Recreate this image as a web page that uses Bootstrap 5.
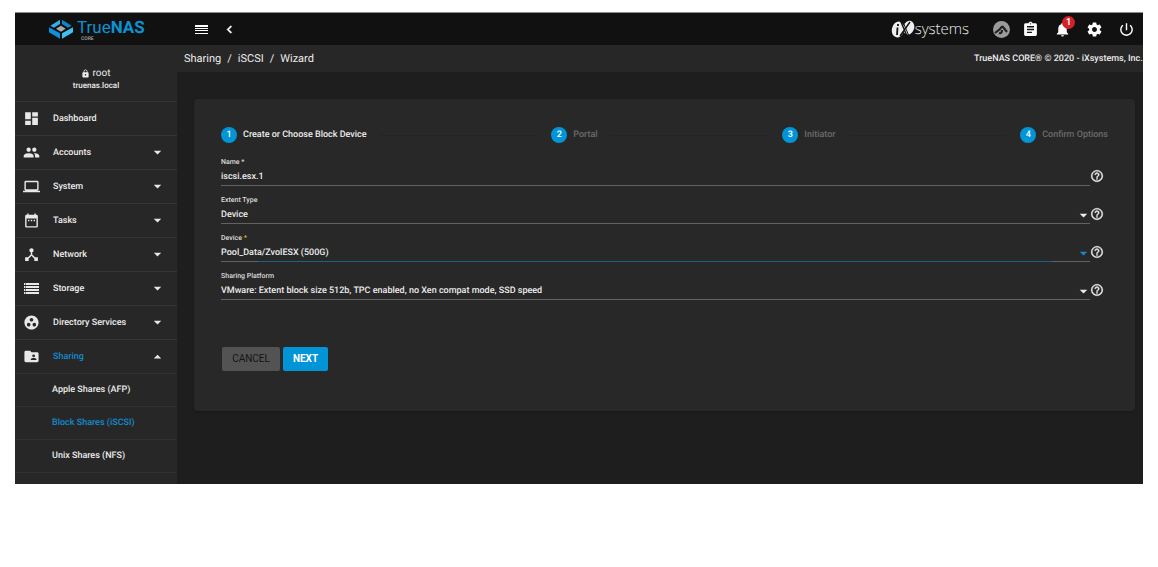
<!DOCTYPE html>
<html lang="en" data-bs-theme="dark">
<head>
<meta charset="utf-8">
<meta name="viewport" content="width=device-width, initial-scale=1">
<title>TrueNAS - Sharing / iSCSI / Wizard</title>
<link href="https://cdn.jsdelivr.net/npm/bootstrap@5.3.0/dist/css/bootstrap.min.css" rel="stylesheet">
<style>
body{background:#fff;color:#ececec;font-family:Roboto,"Liberation Sans",sans-serif;font-size:9px;line-height:14px;font-weight:500;padding:12px 15px;text-rendering:geometricPrecision}
a{color:inherit;text-decoration:none}
svg{display:block;flex:none;fill:currentColor}
.app{background:#1e1e1e;border-top:1px solid #8c8c8c;overflow:hidden}
.topbar{background:#111;height:32px;padding-right:1px}
.brand-box{width:162px;padding-left:34px;flex:none;color:#0b92d4}
.brand-name{font-size:17px;line-height:16px;font-weight:400}
.brand-sub{font-size:5px;line-height:6px;color:#aaa;padding-left:4px}
.bar-btn{background:none;border:0;padding:0;color:#fff;display:flex;align-items:center;justify-content:center;position:relative}
.tool{width:32px;height:32px}
.alert-count{position:absolute;left:16px;top:3px;width:13px;height:13px;border-radius:50%;background:#d3222a;font-size:9px;line-height:13px;font-weight:700;text-align:center}
.vendor{font:300 15px/20px "Open Sans","Liberation Sans",sans-serif;color:#eee}
.side{width:162px;flex:none;background:#272727;padding-bottom:11px}
.who{height:56px;padding-top:22px}
.who-name{font-size:10px;line-height:13px;font-weight:400}
.who-host{font-size:8px;line-height:12px}
.side-item{height:34px;padding:0 12px 0 8px;border-top:1px solid #353535}
.side-item span{padding-left:13px}
.side-sub{height:33px;padding-left:37px;border-top:1px solid #313131}
.side-sub:last-child{border-bottom:1px solid #313131;height:34px}
.on{color:#118bcd}
.side-item svg{color:#e8e8e8}
.crumbs{height:27px;background:#272727;padding-left:7px}
.trail{font-size:11px;gap:6px;font-weight:400}
.legal{width:169px;flex:none;white-space:nowrap}
.stage{padding:27px 8px 12px 17px}
.panel{background:#282828;border-radius:4px;padding:28px 27px 40px;box-shadow:0 1px 2px #181818}
.steps{margin-bottom:13px}
.step-no{width:16px;height:16px;border-radius:50%;background:#0195d8;color:#fff;line-height:16px;text-align:center;margin-right:6px}
.step-off{color:#6b6b6b}
.rule{height:1px;background:#242424;margin:0 13px}
.field{height:29px;margin-bottom:9px}
.field label{display:block;font-size:7px;line-height:13px;color:#dcdcdc}
.line{height:17px;border-bottom:1px solid #626262}
.line input,.line select{appearance:none;background:none;border:0;outline:0;padding:0;margin:0;width:100%;height:16px;color:#ececec;font:inherit;line-height:16px;text-rendering:inherit}
.line svg{pointer-events:none;margin-right:-1px}
.line-focus{border-image:linear-gradient(90deg,#626262 38px,#1b6283 38px,#1b6283 calc(100% - 39px),#626262 calc(100% - 39px)) 1}
.star{color:#f0b400}
.help{margin-right:4px;padding-top:13px}
.acts{padding:39px 0 0 1px;gap:3px}
.act{height:24px;border:0;border-radius:2px;font-size:10px;line-height:24px;padding:0;text-align:center}
.act-cancel{width:58px;background:#535353;color:#151515}
.act-next{width:45px;background:#0195d8;color:#fff;font-weight:700}
</style>
</head>
<body>
<svg class="d-none" aria-hidden="true">
<symbol id="down" viewBox="0 0 24 24"><path d="M6 9l6 6 6-6z"/></symbol>
<symbol id="help" viewBox="0 0 24 24"><path d="M11 18h2v-2h-2v2zm1-16C6.480 2 2 6.480 2 12s4.480 10 10 10 10-4.480 10-10S17.520 2 12 2zm0 18c-4.410 0-8-3.590-8-8s3.590-8 8-8 8 3.590 8 8-3.590 8-8 8zm0-14c-2.210 0-4 1.790-4 4h2c0-1.100.9-2 2-2s2 .9 2 2c0 2-3 1.750-3 5h2c0-2.250 3-2.500 3-5 0-2.210-1.790-4-4-4z" stroke="currentColor" stroke-width=".6"/></symbol>
</svg>
<div class="app">
<header class="topbar d-flex align-items-center">
  <a href="#" class="brand-box d-flex align-items-center" aria-label="TrueNAS CORE">
    <svg width="24" height="20" viewBox="147 56 72 58"><path fill="#2fb0e8" d="M151 75l29-18v13l-18 11z"/><path fill="#0c86cb" d="M186 57l29 18-11 6-18-11z"/><path fill="#0d92da" d="M147 80l33 18v16l-33-19z"/><path fill="#3fc0f2" d="M186 98l33-18v15l-33 19z"/><path fill="#aaa" d="M168 84l15-9 14 9-14 9z"/></svg>
    <span class="ps-1 pt-1"><span class="brand-name d-block">True<b>NAS</b></span><span class="brand-sub d-block">CORE</span></span>
  </a>
  <button class="bar-btn ms-3" aria-label="Toggle menu"><svg width="17" height="17" viewBox="0 0 17 17"><path d="M2 4h13v2H2zM2 7h13v1H2zM2 9h13v1H2zM2 12h13v1H2z"/></svg></button>
  <button class="bar-btn ms-2 ps-1" aria-label="Collapse"><svg width="15" height="15" viewBox="0 0 24 24"><path stroke="currentColor" d="M15.410 7.410L14 6l-6 6 6 6 1.410-1.410L10.830 12z"/></svg></button>
  <a href="#" class="vendor d-flex align-items-center ms-auto me-3" aria-label="iXsystems">
    <svg width="24" height="18" viewBox="0 0 24 18"><ellipse cx="7" cy="9.500" rx="6" ry="8" transform="rotate(12 7 9)"/><ellipse cx="17.500" cy="7.500" rx="5.500" ry="7" transform="rotate(20 17 8)"/><path d="M10 2l6 14M19 2L9 16" stroke="#111" stroke-width="1.400"/><path d="M12 2l6 14" stroke="#111" stroke-width="1"/><path d="M6.500 7.500L6 15M7 4v2" stroke="#111" stroke-width="1.800"/></svg>
    <span>systems</span>
  </a>
  <button class="bar-btn me-1 ms-2" aria-label="TrueCommand"><svg width="17" height="17" viewBox="0 0 17 17"><circle cx="8.500" cy="8.500" r="8.500" fill="#9b9b9b"/><path fill="none" stroke="#222" stroke-width="2.200" d="M2 12l5-4q2-3 3-2l4 5M6 12q3 1 3-3"/></svg></button>
  <button class="bar-btn tool" aria-label="Task manager"><svg width="17" height="17" viewBox="0 0 24 24"><path d="M19 3h-4.180C14.400 1.840 13.300 1 12 1c-1.300 0-2.400.84-2.820 2H5c-1.100 0-2 .9-2 2v14c0 1.100.9 2 2 2h14c1.100 0 2-.9 2-2V5c0-1.100-.9-2-2-2zm-7 0c.55 0 1 .45 1 1s-.45 1-1 1-1-.45-1-1 .45-1 1-1zm2 14H7v-2h7v2zm3-4H7v-2h10v2zm0-4H7V7h10v2z"/></svg></button>
  <button class="bar-btn tool" aria-label="Alerts"><svg width="17" height="17" viewBox="0 0 24 24"><path d="M12 22c1.100 0 2-.9 2-2h-4c0 1.100.89 2 2 2zm6-6v-5c0-3.070-1.640-5.640-4.500-6.320V4c0-.83-.67-1.500-1.500-1.500s-1.500.67-1.500 1.500v.68C7.630 5.360 6 7.920 6 11v5l-2 2v1h16v-1l-2-2z"/></svg><span class="alert-count">1</span></button>
  <button class="bar-btn tool" aria-label="Settings"><svg width="17" height="17" viewBox="0 0 24 24"><path d="M19.430 12.980c.04-.32.07-.64.07-.98s-.03-.66-.07-.98l2.110-1.650c.19-.15.24-.42.12-.64l-2-3.460c-.12-.22-.39-.3-.61-.22l-2.490 1c-.52-.4-1.080-.73-1.690-.98l-.38-2.650C14.460 2.180 14.250 2 14 2h-4c-.25 0-.46.18-.49.42l-.38 2.650c-.61.25-1.170.59-1.690.98l-2.490-1c-.23-.09-.49 0-.61.22l-2 3.460c-.13.22-.07.49.12.64l2.110 1.650c-.04.32-.07.65-.07.98s.03.66.07.98l-2.110 1.650c-.19.15-.24.42-.12.64l2 3.460c.12.22.39.3.61.22l2.490-1c.52.4 1.080.73 1.690.98l.38 2.650c.03.24.24.42.49.42h4c.25 0 .46-.18.49-.42l.38-2.650c.61-.25 1.170-.59 1.690-.98l2.490 1c.23.09.49 0 .61-.22l2-3.460c.12-.22.07-.49-.12-.64l-2.110-1.650zM12 15.500c-1.930 0-3.500-1.570-3.500-3.500s1.570-3.500 3.500-3.500 3.500 1.570 3.500 3.500-1.570 3.500-3.500 3.500z"/></svg></button>
  <button class="bar-btn tool" aria-label="Power"><svg width="17" height="17" viewBox="0 0 24 24"><path d="M13 3h-2v10h2V3zm4.830 2.170l-1.420 1.420C17.990 7.860 19 9.810 19 12c0 3.870-3.130 7-7 7s-7-3.130-7-7c0-2.190 1.010-4.140 2.580-5.420L6.170 5.170C4.230 6.820 3 9.260 3 12c0 4.970 4.030 9 9 9s9-4.030 9-9c0-2.740-1.230-5.180-3.170-6.830z"/></svg></button>
</header>
<div class="d-flex">
<nav class="side">
  <div class="who text-center">
    <div class="who-name d-flex justify-content-center align-items-center"><svg class="me-1" width="7" height="9" viewBox="3 0 18 23"><path d="M18 8h-1V6c0-2.760-2.240-5-5-5S7 3.240 7 6v2H6c-1.100 0-2 .9-2 2v10c0 1.100.9 2 2 2h12c1.100 0 2-.9 2-2V10c0-1.100-.9-2-2-2zm-6 9c-1.100 0-2-.9-2-2s.9-2 2-2 2 .9 2 2-.9 2-2 2zm3.100-9H8.900V6c0-1.710 1.390-3.100 3.100-3.100 1.710 0 3.100 1.390 3.100 3.100v2z"/></svg>root</div>
    <div class="who-host">truenas.local</div>
  </div>
  <a href="#" class="side-item d-flex align-items-center"><svg width="17" height="17" viewBox="0 0 24 24"><path d="M3 13h8V3H3v10zm0 8h8v-6H3v6zm10 0h8V11h-8v10zm0-18v6h8V3h-8z"/></svg><span>Dashboard</span></a>
  <a href="#" class="side-item d-flex align-items-center"><svg width="17" height="17" viewBox="0 0 24 24"><path d="M16 11c1.660 0 2.990-1.340 2.990-3S17.660 5 16 5c-1.660 0-3 1.340-3 3s1.340 3 3 3zm-8 0c1.660 0 2.990-1.340 2.990-3S9.660 5 8 5C6.340 5 5 6.340 5 8s1.340 3 3 3zm0 2c-2.330 0-7 1.170-7 3.500V19h14v-2.500c0-2.330-4.670-3.500-7-3.500zm8 0c-.29 0-.62.02-.97.05 1.160.84 1.970 1.970 1.970 3.450V19h6v-2.500c0-2.330-4.670-3.500-7-3.500z"/></svg><span>Accounts</span><svg class="ms-auto" width="15" height="15"><use href="#down"/></svg></a>
  <a href="#" class="side-item d-flex align-items-center"><svg width="17" height="17" viewBox="0 0 24 24"><path d="M20 18c1.100 0 1.990-.9 1.990-2L22 6c0-1.100-.9-2-2-2H4c-1.100 0-2 .9-2 2v10c0 1.100.9 2 2 2H0v2h24v-2h-4zM4 6h16v10H4V6z"/></svg><span>System</span><svg class="ms-auto" width="15" height="15"><use href="#down"/></svg></a>
  <a href="#" class="side-item d-flex align-items-center"><svg width="17" height="17" viewBox="0 0 24 24"><path d="M9 11H7v2h2v-2zm4 0h-2v2h2v-2zm4 0h-2v2h2v-2zm2-7h-1V2h-2v2H8V2H6v2H5c-1.110 0-1.990.9-1.990 2L3 20c0 1.100.89 2 2 2h14c1.100 0 2-.9 2-2V6c0-1.100-.9-2-2-2zm0 16H5V9h14v11z"/></svg><span>Tasks</span><svg class="ms-auto" width="15" height="15"><use href="#down"/></svg></a>
  <a href="#" class="side-item d-flex align-items-center"><svg width="17" height="17" viewBox="0 0 24 24"><path d="M17 16l-4-4V8.820C14.160 8.400 15 7.300 15 6c0-1.660-1.340-3-3-3S9 4.340 9 6c0 1.300.84 2.400 2 2.820V12l-4 4H3v5h5v-3.050l4-4.200 4 4.200V21h5v-5h-4z"/></svg><span>Network</span><svg class="ms-auto" width="15" height="15"><use href="#down"/></svg></a>
  <a href="#" class="side-item d-flex align-items-center"><svg width="17" height="17" viewBox="0 0 17 17"><path d="M1 3h15v2H1zM1 6h15v2H1zM1 9h15v2H1zM1 12h15v2H1z"/><path fill="#777" d="M2 3h1v2H2zM2 6h1v2H2zM2 9h1v2H2zM2 12h1v2H2z"/></svg><span>Storage</span><svg class="ms-auto" width="15" height="15"><use href="#down"/></svg></a>
  <a href="#" class="side-item d-flex align-items-center"><svg width="17" height="17" viewBox="0 0 24 24"><path d="M12 2C6.480 2 2 6.480 2 12s4.480 10 10 10 10-4.480 10-10S17.520 2 12 2zM8 17.500c-1.380 0-2.500-1.120-2.500-2.500s1.120-2.500 2.500-2.500 2.500 1.120 2.500 2.500-1.120 2.500-2.500 2.500zM9.500 8c0-1.380 1.120-2.500 2.500-2.500s2.500 1.120 2.500 2.500-1.120 2.500-2.500 2.500S9.500 9.380 9.500 8zm6.500 9.500c-1.380 0-2.500-1.120-2.500-2.500s1.120-2.500 2.500-2.500 2.500 1.120 2.500 2.500-1.120 2.500-2.500 2.500z"/></svg><span>Directory Services</span><svg class="ms-auto" width="15" height="15"><use href="#down"/></svg></a>
  <a href="#" class="side-item d-flex align-items-center"><svg width="17" height="17" viewBox="0 0 24 24"><path d="M20 6h-8l-2-2H4c-1.100 0-1.990.9-1.990 2L2 18c0 1.100.9 2 2 2h16c1.100 0 2-.9 2-2V8c0-1.100-.9-2-2-2zm-5 3c1.100 0 2 .9 2 2s-.9 2-2 2-2-.9-2-2 .9-2 2-2zm4 8h-8v-1c0-1.330 2.670-2 4-2s4 .67 4 2v1z"/></svg><span class="on">Sharing</span><svg class="ms-auto" width="15" height="15" viewBox="0 0 24 24"><path d="M6 15l6-6 6 6z"/></svg></a>
  <div>
    <a href="#" class="side-sub d-flex align-items-center">Apple Shares (AFP)</a>
    <a href="#" class="side-sub d-flex align-items-center on">Block Shares (iSCSI)</a>
    <a href="#" class="side-sub d-flex align-items-center">Unix Shares (NFS)</a>
  </div>
</nav>
<main class="flex-fill overflow-hidden">
  <div class="crumbs d-flex align-items-center justify-content-between">
    <div class="trail d-flex"><a href="#">Sharing</a><span>/</span><a href="#">iSCSI</a><span>/</span><a href="#">Wizard</a></div>
    <div class="legal">TrueNAS CORE® © 2020 - iXsystems, Inc.</div>
  </div>
  <div class="stage">
  <form class="panel">
    <div class="steps d-flex align-items-center">
      <span class="step-no">1</span><span>Create or Choose Block Device</span><span class="rule flex-fill"></span>
      <span class="step-no">2</span><span class="step-off">Portal</span><span class="rule flex-fill"></span>
      <span class="step-no">3</span><span class="step-off">Initiator</span><span class="rule flex-fill"></span>
      <span class="step-no">4</span><span class="step-off">Confirm Options</span>
    </div>
    <div class="field d-flex">
      <div class="flex-fill"><label for="f-name">Name *</label><div class="line d-flex"><input id="f-name" type="text" value="iscsi.esx.1"></div></div>
      <svg class="help" width="14" height="28"><use href="#help" width="14" height="14"/></svg>
    </div>
    <div class="field d-flex">
      <div class="flex-fill"><label for="f-type">Extent Type</label><div class="line d-flex align-items-center"><select id="f-type"><option>Device</option></select><svg width="15" height="15"><use href="#down"/></svg></div></div>
      <svg class="help" width="14" height="28"><use href="#help" width="14" height="14"/></svg>
    </div>
    <div class="field d-flex">
      <div class="flex-fill"><label for="f-dev">Device <span class="star">*</span></label><div class="line line-focus d-flex align-items-center"><select id="f-dev"><option>Pool_Data/ZvolESX (500G)</option></select><svg class="on" width="15" height="15"><use href="#down"/></svg></div></div>
      <svg class="help" width="14" height="28"><use href="#help" width="14" height="14"/></svg>
    </div>
    <div class="field d-flex">
      <div class="flex-fill"><label for="f-plat">Sharing Platform</label><div class="line d-flex align-items-center"><select id="f-plat"><option>VMware: Extent block size 512b, TPC enabled, no Xen compat mode, SSD speed</option></select><svg width="15" height="15"><use href="#down"/></svg></div></div>
      <svg class="help" width="14" height="28"><use href="#help" width="14" height="14"/></svg>
    </div>
    <div class="acts d-flex"><button type="button" class="act act-cancel">CANCEL</button><button type="button" class="act act-next">NEXT</button></div>
  </form>
  </div>
</main>
</div>
</div>
<script src="https://cdn.jsdelivr.net/npm/bootstrap@5.3.0/dist/js/bootstrap.bundle.min.js"></script>
</body>
</html>
